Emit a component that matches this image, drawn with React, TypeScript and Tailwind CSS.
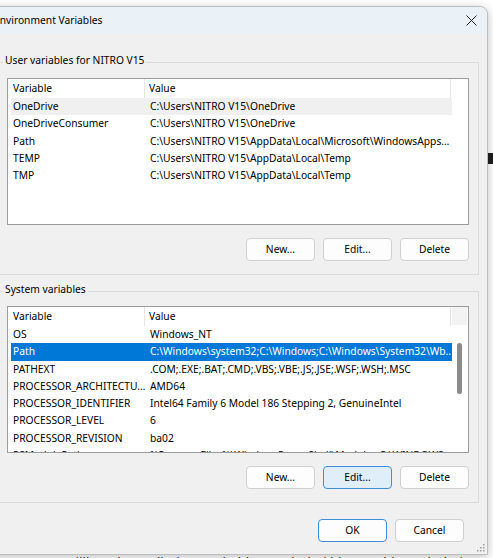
import React from 'react';

type EnvRow = { name: string; value: string };

const userVars: EnvRow[] = [
    { name: 'OneDrive', value: 'C:\\Users\\NITRO V15\\OneDrive' },
    { name: 'OneDriveConsumer', value: 'C:\\Users\\NITRO V15\\OneDrive' },
    { name: 'Path', value: 'C:\\Users\\NITRO V15\\AppData\\Local\\Microsoft\\WindowsApps…' },
    { name: 'TEMP', value: 'C:\\Users\\NITRO V15\\AppData\\Local\\Temp' },
    { name: 'TMP', value: 'C:\\Users\\NITRO V15\\AppData\\Local\\Temp' },
];

const systemVars: EnvRow[] = [
    { name: 'OS', value: 'Windows_NT' },
    { name: 'Path', value: 'C:\\Windows\\system32;C:\\Windows;C:\\Windows\\System32\\Wb…' },
    { name: 'PATHEXT', value: '.COM;.EXE;.BAT;.CMD;.VBS;.VBE;.JS;.JSE;.WSF;.WSH;.MSC' },
    { name: 'PROCESSOR_ARCHITECTU…', value: 'AMD64' },
    { name: 'PROCESSOR_IDENTIFIER', value: 'Intel64 Family 6 Model 186 Stepping 2, GenuineIntel' },
    { name: 'PROCESSOR_LEVEL', value: '6' },
    { name: 'PROCESSOR_REVISION', value: 'ba02' },
    { name: 'PSModulePath', value: '%ProgramFiles%\\WindowsPowerShell\\Modules;C:\\WINDOWS…' },
];

interface ListViewProps {
    rows: EnvRow[];
    hovered?: number;
    selected?: number;
    scrollable?: boolean;
}

const ListView = ({ rows, hovered, selected, scrollable }: ListViewProps) => {
    return (
        <div className="flex h-[147px] border border-[#9c9c9c] bg-white overflow-hidden">
            <div className="flex flex-col w-[444px]">
                {/* Header */}
                <div className="flex h-[19px] shrink-0 items-center">
                    <div className="w-[137px] h-full pl-[5px] flex items-center border-r border-[#e5e5e5]">Variable</div>
                    <div className="w-[306px] h-full pl-[4px] flex items-center border-r border-[#e5e5e5]">Value</div>
                </div>
                {/* Rows */}
                <div className="flex flex-col pl-[3px]">
                    {rows.map((r, i) => (
                        <div
                            key={r.name + i}
                            className={`flex h-[17.3px] shrink-0 items-center ${i === selected
                                ? 'bg-[#0078d7] text-white'
                                : i === hovered
                                    ? 'bg-[#f0f0f0]'
                                    : ''
                                }`}
                        >
                            <div className="w-[134px] pl-[2px] whitespace-nowrap overflow-hidden">{r.name}</div>
                            <div className="w-[306px] pl-[5px] whitespace-nowrap overflow-hidden">{r.value}</div>
                        </div>
                    ))}
                </div>
            </div>
            {/* Scrollbar column */}
            <div className="flex flex-col w-[15px] items-center">
                {scrollable && (
                    <>
                        <div className="w-full h-[18px] bg-[#f3f3f3]" />
                        <div className="mt-[18px] ml-[-1px] w-[5px] h-[51px] rounded-full bg-[#8a8a8a]" />
                    </>
                )}
            </div>
        </div>
    );
};

const Btn = ({ label, variant }: { label: string; variant?: 'focus' | 'default' }) => (
    <div
        className={`w-[69px] h-[23px] flex items-center justify-center rounded-[4px] border ${variant === 'focus'
            ? 'bg-[#e0eef9] border-[#3f8fd8]'
            : variant === 'default'
                ? 'bg-[#fdfdfd] border-[#3f8fd8]'
                : 'bg-[#fdfdfd] border-[#d0d0d0]'
            }`}
    >
        {label}
    </div>
);

const GroupBox = ({ title, children }: { title: string; children: React.ReactNode }) => (
    <div className="border border-[#dadada] px-[9px] pb-[13px] flex flex-col">
        <div className="-mt-[10px] ml-[-4px] w-fit px-[2px] bg-[#f0f0f0] leading-[14px]">{title}</div>
        {children}
    </div>
);

export default function App() {
    return (
        <div className="w-[493px] h-[558px] overflow-hidden bg-white relative font-['Noto_Sans',sans-serif] text-[10.25px] text-[#000]">
            {/* bits of the page behind the dialog */}
            <div className="absolute right-0 top-[153px] w-[5px] h-[11px] bg-[#1f1f1f]" />

            <div className="relative z-10 ml-[-20px] mt-[6px] w-[508px] h-[549px] rounded-tr-[8px] border border-[#bdbdbd] bg-[#f0f0f0] shadow-[0_2px_10px_rgba(0,0,0,0.25)] flex flex-col">
                {/* Title bar */}
                <div className="h-[27px] shrink-0 flex items-center justify-between pl-[13px] pr-[10px] bg-[#eaf2f8] rounded-tr-[8px]">
                    <span>Environment Variables</span>
                    <svg width="11" height="11" viewBox="0 0 11 11">
                        <path d="M0.5 0.5 L10.5 10.5 M10.5 0.5 L0.5 10.5" stroke="#222" strokeWidth="1" />
                    </svg>
                </div>

                <div className="flex flex-col pl-[16px] pr-[8px]">
                    <div className="mt-[28px]">
                        <GroupBox title="User variables for NITRO V15">
                            <div className="mt-[11px]">
                                <ListView rows={userVars} hovered={0} />
                            </div>
                            <div className="mt-[13px] flex justify-end gap-[8px]">
                                <Btn label="New..." />
                                <Btn label="Edit..." />
                                <Btn label="Delete" />
                            </div>
                        </GroupBox>
                    </div>

                    <div className="mt-[16px]">
                        <GroupBox title="System variables">
                            <div className="mt-[10px]">
                                <ListView rows={systemVars} selected={1} scrollable />
                            </div>
                            <div className="mt-[13px] flex justify-end gap-[8px]">
                                <Btn label="New..." />
                                <Btn label="Edit..." variant="focus" />
                                <Btn label="Delete" />
                            </div>
                        </GroupBox>
                    </div>

                    <div className="mt-[16px] flex justify-end gap-[8px] pr-[15px]">
                        <Btn label="OK" variant="default" />
                        <Btn label="Cancel" />
                    </div>
                </div>

                {/* resize grip */}
                <svg className="absolute right-[2px] bottom-[2px]" width="8" height="8" viewBox="0 0 8 8">
                    <rect x="6" y="0" width="1.5" height="1.5" fill="#9a9a9a" />
                    <rect x="3" y="3" width="1.5" height="1.5" fill="#9a9a9a" />
                    <rect x="6" y="3" width="1.5" height="1.5" fill="#9a9a9a" />
                    <rect x="0" y="6" width="1.5" height="1.5" fill="#9a9a9a" />
                    <rect x="3" y="6" width="1.5" height="1.5" fill="#9a9a9a" />
                    <rect x="6" y="6" width="1.5" height="1.5" fill="#9a9a9a" />
                </svg>
            </div>

            <div className="-mt-[1px] pl-[68px] whitespace-nowrap text-[13px] leading-[16px] text-[#222]">
                Pilih Path → Edit dan tambahkan Path dari bin Gurobi (tesab dari Gurobi 9
            </div>
        </div>
    );
}
